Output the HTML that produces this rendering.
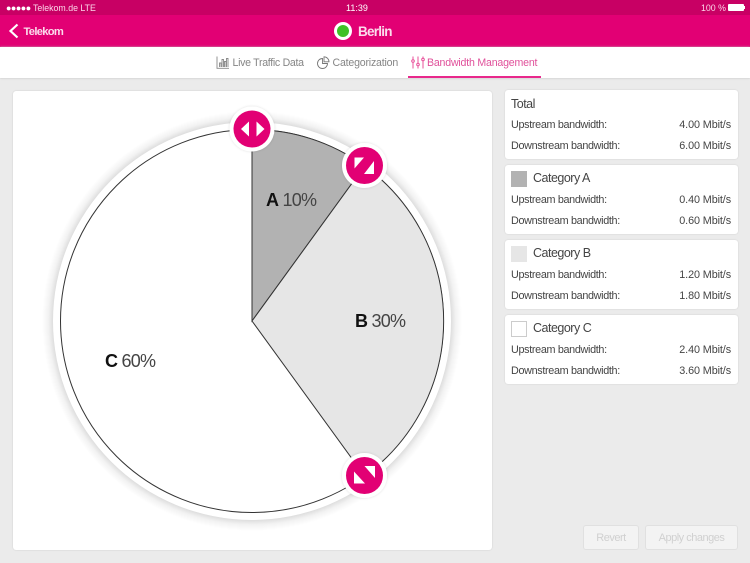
<!DOCTYPE html>
<html><head><meta charset="utf-8">
<style>
html,body{margin:0;padding:0;background:#ebebeb}
body{width:750px;height:563px;overflow:hidden;position:relative;font-family:"Liberation Sans",sans-serif;color:#333}
.a{position:absolute;white-space:nowrap}
.card{position:absolute;left:504.500px;width:233px;height:68.500px;background:#fff;border-radius:3px;box-shadow:0 0 1.500px #c8c8c8}
.card .h{position:absolute;top:6px;font-size:12.500px;line-height:15px;color:#444;letter-spacing:-.5px}
.card .l,.card .r{position:absolute;font-size:10.800px;line-height:14px;color:#444}
.card .l{left:6.500px;letter-spacing:-.33px}.card .r{right:6.500px;letter-spacing:-.1px}
.card .sw{position:absolute;left:6.500px;top:6px;width:15.500px;height:15.500px;box-sizing:border-box}
.btn{position:absolute;top:525px;height:25px;box-sizing:border-box;background:#f3f3f3;border:1px solid #e0e0e0;border-radius:3px;color:#d0d0d0;font-size:11px;line-height:25px;text-align:center;letter-spacing:-.5px}
.pct{position:absolute;white-space:nowrap;font-size:18px;line-height:21px;color:#444;letter-spacing:-.75px}
.pct b{color:#111}
</style></head><body>
<div class="a" style="left:0;top:0;width:750px;height:15px;background:#c80064"></div>
<div class="a" style="left:0;top:15px;width:750px;height:32px;background:#e20074"></div>
<div class="a" style="left:6px;top:2px;font-size:9px;line-height:12px;letter-spacing:-.5px;color:#fff">●●●●●</div>
<div class="a" style="left:33px;top:2px;font-size:8.800px;line-height:12px;color:#fbd5e8">Telekom.de LTE</div>
<div class="a" style="left:346px;top:2px;font-size:9px;line-height:12px;color:#fff">11:39</div>
<div class="a" style="left:701px;top:2px;font-size:8.800px;line-height:12px;color:#fbd5e8">100 %</div>
<div class="a" style="left:728px;top:4px;width:16px;height:7px;background:#fff;border-radius:1px"></div>
<div class="a" style="left:744px;top:6px;width:1px;height:3px;background:#fff"></div>
<svg class="a" style="left:8px;top:23px" width="12" height="16" viewBox="0 0 12 16"><path d="M9.500 1.500 2.500 8l7 6.500" fill="none" stroke="#fff" stroke-width="2.200"/></svg>
<div class="a" style="left:23.500px;top:25px;font-size:11.200px;line-height:15px;font-weight:bold;color:#fbdcec;letter-spacing:-.7px">Telekom</div>
<div class="a" style="left:334px;top:22px;width:18px;height:18px;border-radius:50%;background:#fff"></div>
<div class="a" style="left:337px;top:25px;width:12px;height:12px;border-radius:50%;background:#3fc126"></div>
<div class="a" style="left:358px;top:23px;font-size:13.500px;line-height:17px;font-weight:bold;color:#fbdcec;letter-spacing:-.75px">Berlin</div>

<div class="a" style="left:0;top:47px;width:750px;height:31px;background:#fff;box-shadow:0 0 2px #bbb"></div>
<svg class="a" style="left:216px;top:56px" width="14" height="13" viewBox="0 0 14 13" fill="none" stroke="#888" stroke-width=".9"><path d="M1 .5V12.300H13"/><path d="M3.500 11V7h1.500v4M6 11V3.500h1.500V11M8.500 11V5.500H10V11M10.500 11V2.500H12V11"/></svg>
<div class="a" style="left:232.500px;top:56px;font-size:10.600px;line-height:15px;color:#858585;letter-spacing:-.3px">Live Traffic Data</div>
<svg class="a" style="left:317px;top:56px" width="13" height="13" viewBox="0 0 13 13" fill="none" stroke="#777" stroke-width=".9"><path d="M5.500 2.500a5 5 0 1 0 5 5h-5z"/><path d="M7 .8a5 5 0 0 1 5 5H7z"/></svg>
<div class="a" style="left:332.500px;top:56px;font-size:10.600px;line-height:15px;color:#858585;letter-spacing:-.2px">Categorization</div>
<svg class="a" style="left:411px;top:56px" width="14" height="13" viewBox="0 0 14 13" fill="none" stroke="#e8509a" stroke-width="1"><path d="M2 .5v3M2 6.500v6M7 .5v6.500M7 10v2.500M12 .5v1.500M12 5v7.500"/><circle cx="2" cy="5" r="1.300"/><circle cx="7" cy="8.500" r="1.300"/><circle cx="12" cy="3.500" r="1.300"/></svg>
<div class="a" style="left:427px;top:56px;font-size:10.600px;line-height:15px;color:#e0509a;letter-spacing:-.2px">Bandwidth Management</div>
<div class="a" style="left:408px;top:76px;width:133px;height:2px;background:#e8288c"></div>

<div class="a" style="left:13px;top:91px;width:479px;height:459px;background:#fff;border-radius:3px;box-shadow:0 0 1.500px #c4c4c4"></div>
<svg class="a" style="left:13px;top:91px;overflow:visible" width="479" height="459" viewBox="13 91 479 459">
<defs>
<radialGradient id="sh" gradientUnits="userSpaceOnUse" cx="252" cy="321" r="210"><stop offset=".945" stop-color="#000" stop-opacity=".14"/><stop offset=".97" stop-color="#000" stop-opacity=".05"/><stop offset="1" stop-color="#000" stop-opacity="0"/></radialGradient>
<filter id="f" x="-30%" y="-30%" width="160%" height="160%"><feDropShadow dx="0" dy="0" stdDeviation="1.200" flood-color="#000" flood-opacity=".14"/></filter>
</defs>
<circle cx="252" cy="321" r="210" fill="url(#sh)"/>
<circle cx="252" cy="321" r="199" fill="#fff"/>
<circle cx="252" cy="321" r="191.500" fill="#fff" stroke="#333" stroke-width="1"/>
<path d="M252 321V129.500A191.500 191.500 0 0 1 364.600 166z" fill="#b2b2b2" stroke="#333" stroke-width="1"/>
<path d="M252 321 364.600 166A191.500 191.500 0 0 1 364.600 476z" fill="#e6e6e6" stroke="#333" stroke-width="1"/>
<g filter="url(#f)"><circle cx="252" cy="129" r="22.500" fill="#fff"/><circle cx="364.500" cy="165.500" r="22.500" fill="#fff"/><circle cx="364.500" cy="475.500" r="22.500" fill="#fff"/></g>
<circle cx="252" cy="129" r="18.500" fill="#e20074"/><circle cx="364.500" cy="165.500" r="18.500" fill="#e20074"/><circle cx="364.500" cy="475.500" r="18.500" fill="#e20074"/>
<path d="M249 121.500v15l-8-7.500zM256.500 121.500v15l8-7.500z" fill="#fff"/>
<path d="M354.500 157.500H364l-9.500 11zM374 161v13h-10z" fill="#fff"/>
<path d="M364.500 466H375v12zM354 471.500l11 12H354z" fill="#fff"/>
</svg>
<div class="pct" style="left:266px;top:189.500px"><b>A</b> 10%</div>
<div class="pct" style="left:355px;top:310.500px"><b>B</b> 30%</div>
<div class="pct" style="left:105px;top:350.500px"><b>C</b> 60%</div>

<div class="card" style="top:90px"><div class="h" style="left:6.500px;top:6.500px">Total</div><div class="l" style="top:28px">Upstream bandwidth:</div><div class="r" style="top:28px">4.00 Mbit/s</div><div class="l" style="top:49px">Downstream bandwidth:</div><div class="r" style="top:49px">6.00 Mbit/s</div></div>
<div class="card" style="top:165px"><div class="sw" style="background:#b2b2b2"></div><div class="h" style="left:28.500px">Category A</div><div class="l" style="top:27.500px">Upstream bandwidth:</div><div class="r" style="top:27.500px">0.40 Mbit/s</div><div class="l" style="top:49px">Downstream bandwidth:</div><div class="r" style="top:49px">0.60 Mbit/s</div></div>
<div class="card" style="top:240px"><div class="sw" style="background:#e6e6e6"></div><div class="h" style="left:28.500px">Category B</div><div class="l" style="top:27.500px">Upstream bandwidth:</div><div class="r" style="top:27.500px">1.20 Mbit/s</div><div class="l" style="top:49px">Downstream bandwidth:</div><div class="r" style="top:49px">1.80 Mbit/s</div></div>
<div class="card" style="top:315px"><div class="sw" style="background:#fff;border:1px solid #ccc"></div><div class="h" style="left:28.500px">Category C</div><div class="l" style="top:27.500px">Upstream bandwidth:</div><div class="r" style="top:27.500px">2.40 Mbit/s</div><div class="l" style="top:49px">Downstream bandwidth:</div><div class="r" style="top:49px">3.60 Mbit/s</div></div>

<div class="btn" style="left:583px;width:56px">Revert</div>
<div class="btn" style="left:645px;width:93px">Apply changes</div>
</body></html>
